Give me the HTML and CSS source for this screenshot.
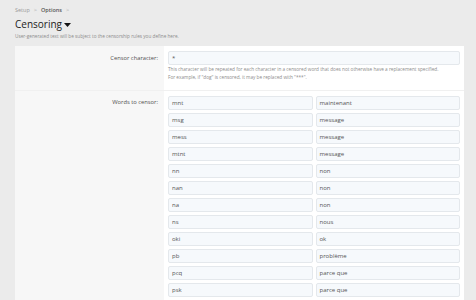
FILE: index.html
```html
<!DOCTYPE html>
<html>
<head>
<meta charset="utf-8">
<link rel="stylesheet" href="styles.css">
</head>
<body>
<div class="page">
  <div class="crumbs">
    <span class="crumb">Setup</span><span class="sep">&gt;</span><span class="crumb strong">Options</span><span class="sep">&gt;</span>
  </div>
  <h1 class="title">Censoring <svg class="caret" width="7" height="4" viewBox="0 0 7 4"><path d="M0 0 H7 L3.5 4 Z" fill="#141414"/></svg></h1>
  <p class="desc">User-generated text will be subject to the censorship rules you define here.</p>
  <div class="card">
    <div class="row first">
      <div class="label">Censor character:</div>
      <div class="field">
        <div class="input">*</div>
        <div class="help">This character will be repeated for each character in a censored word that does not otherwise have a replacement specified.<br>For example, if "dog" is censored, it may be replaced with "***".</div>
      </div>
    </div>
    <div class="row">
      <div class="label">Words to censor:</div>
      <div class="field">
        <div class="pairs">
          <div class="input">mnt</div><div class="input">maintenant</div>
          <div class="input">msg</div><div class="input">message</div>
          <div class="input">mess</div><div class="input">message</div>
          <div class="input">mtnt</div><div class="input">message</div>
          <div class="input">nn</div><div class="input">non</div>
          <div class="input">nan</div><div class="input">non</div>
          <div class="input">na</div><div class="input">non</div>
          <div class="input">ns</div><div class="input">nous</div>
          <div class="input">oki</div><div class="input">ok</div>
          <div class="input">pb</div><div class="input">problème</div>
          <div class="input">pcq</div><div class="input">parce que</div>
          <div class="input">psk</div><div class="input">parce que</div>
          <div class="input"></div><div class="input"></div>
        </div>
      </div>
    </div>
  </div>
</div>
</body>
</html>
```

FILE: styles.css
```css
html, body {
  margin: 0;
  padding: 0;
  background: #ebebeb;
  font-family: "Open Sans", "Noto Sans", sans-serif;
  height: 300px;
  overflow: hidden;
}
.page {
  padding: 6px 12px 0 15px;
}
.crumbs {
  display: flex;
  align-items: center;
  gap: 3px;
  font-size: 5.5px;
  line-height: 8px;
  height: 8px;
  color: #999;
}
.crumb.strong {
  color: #555;
  font-weight: 600;
}
.sep {
  color: #aaa;
  margin: 0 1px;
}
.title {
  margin: 2px 0 0 0;
  font-size: 10px;
  line-height: 16px;
  height: 16px;
  font-weight: 400;
  color: #222;
  display: flex;
  align-items: center;
  gap: 2px;
}
.caret {
  margin-top: 1px;
}
.desc {
  margin: 1px 0 0 0;
  font-size: 4.7px;
  line-height: 7px;
  color: #8c8c8c;
}
.card {
  margin-top: 6px;
  background: #fff;
  display: flex;
  flex-direction: column;
}
.row {
  display: grid;
  grid-template-columns: 149px 1fr;
  border-top: 1px solid #f0f0f0;
}
.row.first {
  border-top: 0;
}
.label {
  background: #f7f7f7;
  text-align: right;
  padding: 9px 6px 0 0;
  font-size: 5.8px;
  line-height: 7px;
  color: #505050;
}
.row:not(.first) .label {
  padding-top: 8px;
}
.field {
  padding: 5px 4px 9px 4px;
}
.row:not(.first) .field {
  padding-top: 5px;
}
.input {
  box-sizing: border-box;
  height: 14px;
  background: #f6f9fc;
  border: 1px solid #e4e8ec;
  border-radius: 2px;
  padding: 0 3px;
  font-size: 6px;
  line-height: 12px;
  color: #555;
}
.help {
  margin-top: 1px;
  font-size: 4.7px;
  line-height: 7.5px;
  color: #8c8c8c;
}
.pairs {
  display: grid;
  grid-template-columns: 1fr 1fr;
  column-gap: 3px;
  row-gap: 3px;
}
```
